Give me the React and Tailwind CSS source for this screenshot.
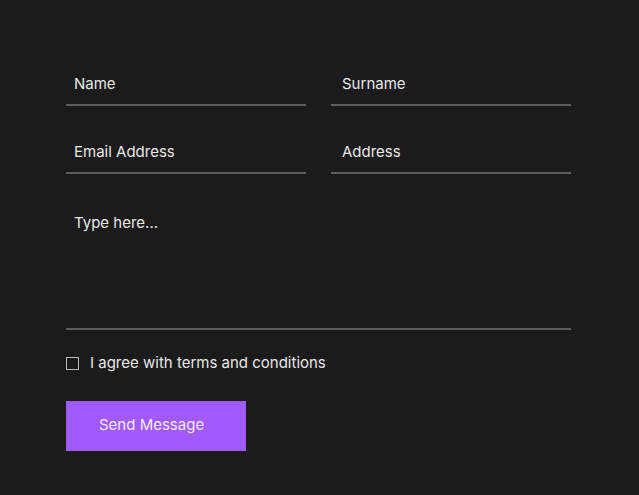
import React, { useState } from "react";

function Field({ placeholder, right }) {
  return (
    <input
      type="text"
      placeholder={placeholder}
      className={
        "h-[42px] w-full border-b-2 border-[#5c5c5c] bg-transparent pb-[2px] text-[15px] text-[#e8e8e8] placeholder-[#e8e8e8] outline-none " +
        (right ? "px-[11px]" : "px-2")
      }
    />
  );
}

export default function App() {
  const [agree, setAgree] = useState(false);

  return (
    <div
      className="min-h-[495px] w-full bg-[#1b1b1b] pt-[64px]"
      style={{ fontFamily: "Inter, 'Liberation Sans', sans-serif" }}
    >
      <form
        className="ml-[66px] w-[505px]"
        onSubmit={(e) => e.preventDefault()}
      >
        <div className="grid grid-cols-2 gap-x-[25px] gap-y-[26px]">
          <Field placeholder="Name" />
          <Field placeholder="Surname" right />
          <Field placeholder="Email Address" />
          <Field placeholder="Address" right />
        </div>
        <textarea
          placeholder="Type here..."
          className="mt-[26px] block h-[130px] w-full resize-none border-b-2 border-[#5c5c5c] bg-transparent px-2 pt-[12px] text-[15px] text-[#e8e8e8] placeholder-[#e8e8e8] outline-none"
        />
        <label className="mt-[22px] flex items-center gap-[11px] text-[15px] text-[#e8e8e8]">
          <span
            onClick={() => setAgree(!agree)}
            className={
              "h-[13px] w-[13px] border-[1.5px] border-[#bdbdbd] " +
              (agree ? "bg-[#a259ff]" : "bg-transparent")
            }
          ></span>
          I agree with terms and conditions
        </label>
        <button
          type="submit"
          className="mt-[26px] h-[50px] w-[180px] bg-[#a259ff] pl-[33px] text-left text-[15px] text-[#f3ecff]"
        >
          Send Message
        </button>
      </form>
    </div>
  );
}
